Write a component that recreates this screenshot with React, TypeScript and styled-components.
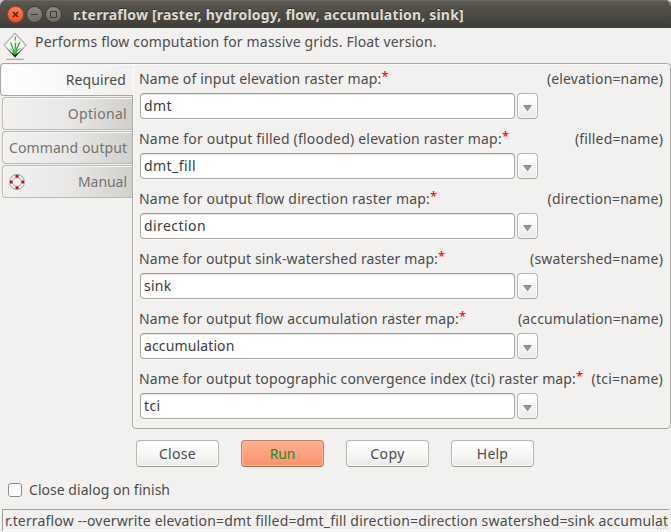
import React from "react";
import styled, { createGlobalStyle, css } from "styled-components";

const GlobalStyle = createGlobalStyle`
  * { box-sizing: border-box; }
  html, body { margin: 0; padding: 0; overflow: hidden; background: #c9c9c9; }
  button { margin: 0; padding: 0; font: inherit; }
`;

const Dialog = styled.div`
  width: 671px;
  height: 532px;
  display: flex;
  flex-direction: column;
  overflow: hidden;
  background: #f2f1f0;
  border-radius: 6px 6px 0 0;
  color: #4c4c4c;
  font: 14px/20px "Noto Sans", "Open Sans", sans-serif;
  white-space: nowrap;
`;

const TitleBar = styled.header`
  flex: none;
  height: 28px;
  display: flex;
  align-items: center;
  padding: 1px 8px 0 7px;
  background: linear-gradient(#5d5b53 0, #55534b 20%, #3e3d39 100%);
  box-shadow: inset 0 1px #6a6860;
`;

const WindowButton = styled.button<{ $primary?: boolean }>`
  flex: none;
  width: 17px;
  height: 17px;
  margin-right: 2px;
  display: grid;
  place-items: center;
  border: 1px solid ${(p) => (p.$primary ? "#a9401f" : "#3b3a36")};
  border-radius: 50%;
  background: ${(p) =>
    p.$primary ? "linear-gradient(#f9855d, #e9531f)" : "linear-gradient(#8b8980, #6d6b63)"};
  color: ${(p) => (p.$primary ? "#4a1c0b" : "#3b3a36")};
  svg { display: block; }
`;

const Spaced = styled.span<{ $tracking?: number }>`
  letter-spacing: ${(p) => p.$tracking ?? 0}px;
`;

const Title = styled(Spaced).attrs({ as: "h1" })`
  margin: 0 0 0 9px;
  color: #dfdbd2;
  font-size: 14px;
  font-weight: 700;
  line-height: 20px;
  text-shadow: 0 -1px #33322e;
`;

const Summary = styled.div`
  flex: none;
  height: 35px;
  display: flex;
  padding: 4px 0 0 3px;
`;

const SummaryText = styled(Spaced)`
  margin: 0 0 0 7px;
  height: 20px;
`;

const Notebook = styled.main`
  flex: none;
  height: 366px;
  display: flex;
`;

const TabList = styled.nav`
  width: 132px;
  display: flex;
  flex-direction: column;
  align-items: flex-end;
  gap: 1px;
`;

const Tab = styled.button<{ $active?: boolean }>`
  position: relative;
  width: 130px;
  height: 33px;
  display: flex;
  align-items: center;
  justify-content: space-between;
  padding: 0 5px 0 6px;
  border: 1px solid #bdbab6;
  border-right: 0;
  border-radius: 4px 0 0 4px;
  background: linear-gradient(90deg, #f2f1f0 0, #e9e8e6 50%, #d2d0cd 100%);
  box-shadow: inset 1px 1px #f8f7f7;
  color: #757370;
  ${(p) =>
    p.$active &&
    css`
      width: 133px;
      margin-right: -1px;
      padding-right: 7px;
      border-color: #a9a7a3;
      background: linear-gradient(90deg, #ffffff 0, #fafafa 35%, #f2f1f0 90%);
      color: #4c4c4c;
      z-index: 1;
    `}
`;

const TabLabel = styled(Spaced)`
  margin-left: auto;
`;

const Panel = styled.section`
  flex: 1;
  padding: 5px 7px 0;
  border: 1px solid #aba9a5;
  border-radius: 0 4px 4px 4px;
  box-shadow: inset 1px 1px #fbfbfa;
`;

const Field = styled.div`
  height: 60px;
`;

const Caption = styled.div`
  height: 24px;
  display: flex;
  align-items: flex-start;
  margin-left: -1px;
`;

const Star = styled.span`
  margin: -3px 0 0;
  color: #f5171d;
  font-size: 13px;
  font-weight: 600;
  line-height: 20px;
`;

const Hint = styled(Spaced)`
  margin-left: auto;
`;

const Combo = styled.div`
  display: flex;
  gap: 2px;
`;

const Entry = styled.div`
  width: 375px;
  height: 26px;
  padding: 2px 3px 0;
  border: 1px solid #aaa8a4;
  border-top-color: #9b9995;
  border-radius: 4px;
  background: #fff;
  box-shadow: 0 1px #f9f9f8, inset 0 1px #e9e8e7;
  color: #3c3c3c;
`;

const DropButton = styled.button`
  width: 21px;
  height: 26px;
  display: grid;
  place-items: center;
  padding-top: 3px;
  border: 1px solid #bab8b4;
  border-bottom-color: #a6a4a0;
  border-radius: 4px;
  background: linear-gradient(#fff, #f8f8f7 45%, #ebeae9);
  box-shadow: inset 0 0 0 1px #fbfbfb;
  svg { display: block; }
`;

const Actions = styled.div`
  flex: none;
  height: 38px;
  display: flex;
  gap: 22px;
  padding: 11px 0 0 136px;
`;

const ActionButton = styled.button<{ $run?: boolean }>`
  width: 83px;
  height: 27px;
  border: 1px solid #b9b7b3;
  border-bottom-color: #9d9b97;
  border-radius: 4px;
  background: linear-gradient(#fff, #f9f9f8 45%, #ebeae9);
  box-shadow: inset 0 0 0 1px #fbfbfb;
  color: #4c4c4c;
  ${(p) =>
    p.$run &&
    css`
      border-color: #b78470;
      border-bottom-color: #a26a55;
      background: linear-gradient(#ffae91, #fca17f 50%, #f5926c);
      box-shadow: inset 0 0 0 1px #ffb498;
      color: #228b22;
    `}
`;

const CloseOption = styled.label`
  flex: none;
  height: 42px;
  display: flex;
  align-items: center;
  gap: 7px;
  padding: 4px 0 0 8px;
`;

const Checkbox = styled.span`
  width: 14px;
  height: 14px;
  border: 1px solid #8e8c88;
  border-radius: 3px;
  background: #fff;
`;

const StatusBar = styled.footer`
  position: relative;
  flex: none;
  width: 667px;
  height: 22px;
  margin-left: 2px;
  padding: 1px 0 0 2px;
  overflow: hidden;
  border: 1px solid #a09e9a;
  border-width: 1px 0 0 1px;
  box-shadow: inset 0 -1px #fff;
`;

const Grip = styled.svg`
  position: absolute;
  right: 0;
  bottom: 1px;
`;

const GrassLogo = () => (
  <svg width="25" height="28" viewBox="0 0 25 28" fill="none">
    <path d="M12 1.4 1 13l11 12L23 13z" fill="#f6f7f5" stroke="#a9aea8" strokeWidth="1.1" />
    <path d="M3.2 15.6 12 25.4l8.8-9.8-5.6 5.2-3.2 1.6-3.2-1.6z" fill="#17201a" />
    <path d="M3.2 27.3h17.6" stroke="#aaaaa6" strokeWidth="1.2" />
    <path d="M12.3 4.5v4.2" stroke="#45ae46" strokeWidth="1.2" />
    <path d="M11.8 22.5c.2-4 .4-8 1-11.8" stroke="#35a837" strokeWidth="1.3" />
    <path d="M11.4 22.5C10.6 18 9.6 14.5 7.6 10.5M12.5 22.5c.6-5 1.8-8.5 4.2-12.2" stroke="#2ca02f" strokeWidth="1.2" />
    <path d="M11 22c-1-3-2.5-4.5-4.2-5.4M12.9 22c.8-3.2 2.4-4.6 4.6-5.4" stroke="#3fae40" />
  </svg>
);

const LifeRing = () => (
  <svg width="16" height="16" viewBox="0 0 16 16" fill="none">
    <circle cx="8" cy="8" r="6" stroke="#989896" strokeWidth="3.8" />
    <circle cx="8" cy="8" r="6" stroke="#f4f4f2" strokeWidth="2.2" />
    <path d="M6.5 1h3v2.5h-3zM6.5 12.5h3V15h-3zM1 6.5h2.5v3H1zM12.5 6.5H15v3h-2.5z" fill="#b51717" />
  </svg>
);

const Arrow = () => (
  <svg width="9" height="6" viewBox="0 0 9 6">
    <path d="M.8.5h7.4L4.5 5.6z" fill="#979591" stroke="#777571" strokeWidth=".8" />
  </svg>
);

type FieldData = {
  label: string;
  tracking: number;
  hint: string;
  hintTracking: number;
  value: string;
  valueTracking: number;
};

const fields: FieldData[] = [
  { label: "Name of input elevation raster map:", tracking: 0.14, hint: "(elevation=name)", hintTracking: 0.14, value: "dmt", valueTracking: 0.45 },
  { label: "Name for output filled (flooded) elevation raster map:", tracking: 0.21, hint: "(filled=name)", hintTracking: 0.15, value: "dmt_fill", valueTracking: 0.42 },
  { label: "Name for output flow direction raster map:", tracking: 0.197, hint: "(direction=name)", hintTracking: 0.21, value: "direction", valueTracking: 0.43 },
  { label: "Name for output sink-watershed raster map:", tracking: 0.125, hint: "(swatershed=name)", hintTracking: 0.17, value: "sink", valueTracking: 0.26 },
  { label: "Name for output flow accumulation raster map:", tracking: 0.143, hint: "(accumulation=name)", hintTracking: 0.11, value: "accumulation", valueTracking: 0.13 },
  { label: "Name for output topographic convergence index (tci) raster map:", tracking: 0.137, hint: "(tci=name)", hintTracking: 0.22, value: "tci", valueTracking: 0.37 },
];

export default function App() {
  return (
    <>
      <GlobalStyle />
      <Dialog>
        <TitleBar>
          <WindowButton $primary aria-label="Close window">
            <svg width="7" height="7" viewBox="0 0 7 7"><path d="M1 1l5 5M6 1 1 6" stroke="currentColor" strokeWidth="1.4" /></svg>
          </WindowButton>
          <WindowButton aria-label="Minimize">
            <svg width="7" height="7" viewBox="0 0 7 7"><path d="M0 3.5h7" stroke="currentColor" /></svg>
          </WindowButton>
          <WindowButton aria-label="Maximize">
            <svg width="7" height="7" viewBox="0 0 7 7"><path d="M.5.5h6v6h-6z" stroke="currentColor" fill="none" /></svg>
          </WindowButton>
          <Title $tracking={0.19}>r.terraflow [raster, hydrology, flow, accumulation, sink]</Title>
        </TitleBar>
        <Summary>
          <GrassLogo />
          <SummaryText $tracking={0.17}>Performs flow computation for massive grids. Float version.</SummaryText>
        </Summary>
        <Notebook>
          <TabList>
            <Tab $active><TabLabel $tracking={0.1}>Required</TabLabel></Tab>
            <Tab><TabLabel $tracking={0.3}>Optional</TabLabel></Tab>
            <Tab><TabLabel $tracking={0.1}>Command output</TabLabel></Tab>
            <Tab><LifeRing /><TabLabel $tracking={-0.05}>Manual</TabLabel></Tab>
          </TabList>
          <Panel>
            {fields.map((f) => (
              <Field key={f.hint}>
                <Caption>
                  <Spaced $tracking={f.tracking}>{f.label}</Spaced>
                  <Star>*</Star>
                  <Hint $tracking={f.hintTracking}>{f.hint}</Hint>
                </Caption>
                <Combo>
                  <Entry><Spaced $tracking={f.valueTracking}>{f.value}</Spaced></Entry>
                  <DropButton aria-label="Choose map"><Arrow /></DropButton>
                </Combo>
              </Field>
            ))}
          </Panel>
        </Notebook>
        <Actions>
          <ActionButton><Spaced $tracking={0.3}>Close</Spaced></ActionButton>
          <ActionButton $run><Spaced $tracking={-0.2}>Run</Spaced></ActionButton>
          <ActionButton><Spaced $tracking={0.4}>Copy</Spaced></ActionButton>
          <ActionButton><Spaced $tracking={0.2}>Help</Spaced></ActionButton>
        </Actions>
        <CloseOption>
          <Checkbox />
          <Spaced $tracking={0.03}>Close dialog on finish</Spaced>
        </CloseOption>
        <StatusBar>
          <Spaced $tracking={0.167}>
            r.terraflow --overwrite elevation=dmt filled=dmt_fill direction=direction swatershed=sink accumulation=accumulation tci=tci
          </Spaced>
          <Grip width="12" height="8" viewBox="0 0 12 8">
            <path d="M9 1h1M6 4h1M9 4h1M0 7h1M3 7h1M6 7h1M9 7h1" stroke="#b5b3b0" />
          </Grip>
        </StatusBar>
      </Dialog>
    </>
  );
}
